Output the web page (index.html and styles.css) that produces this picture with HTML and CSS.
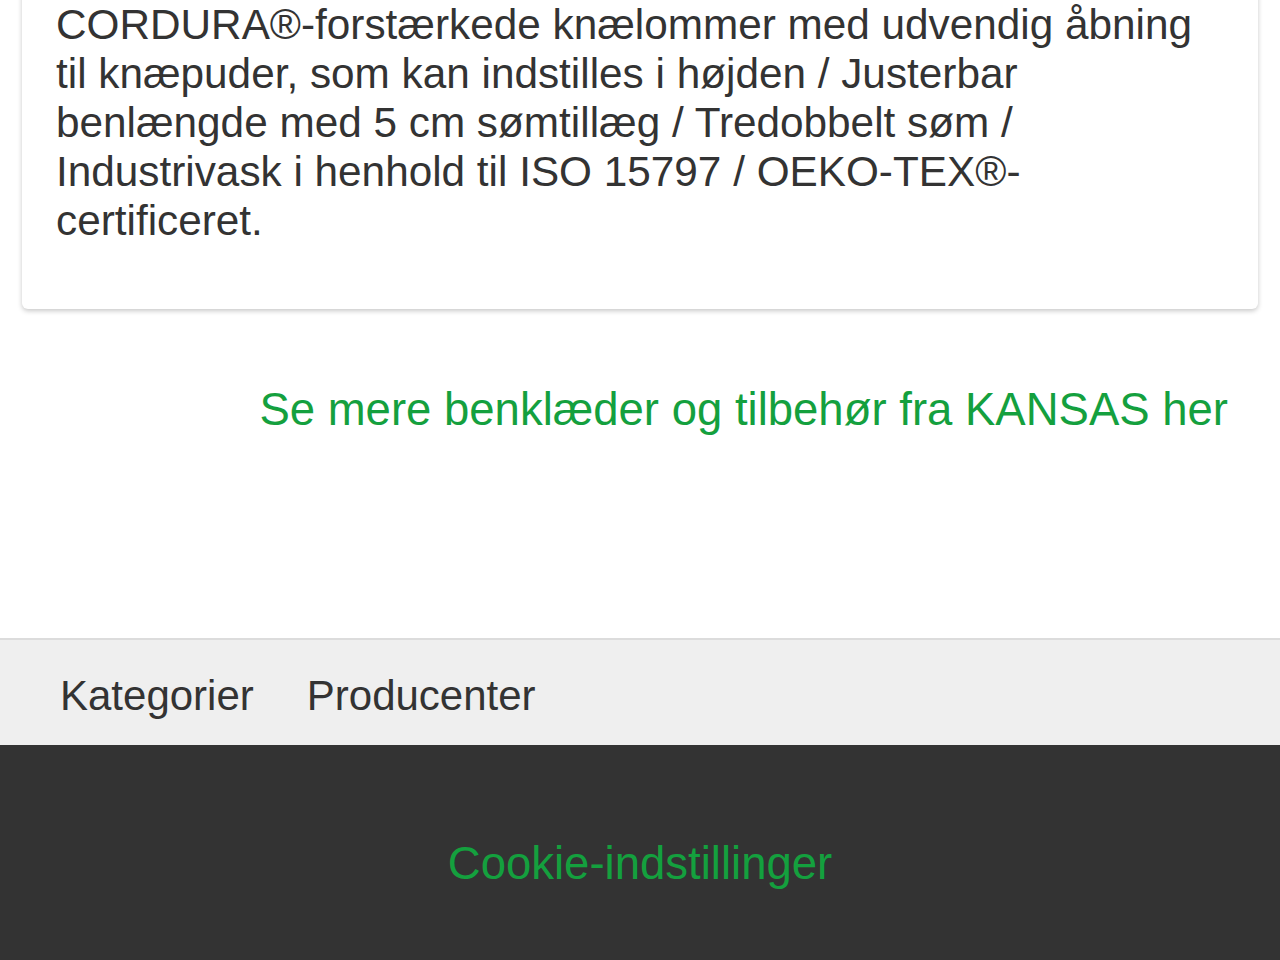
FILE: index.html
```html
<!DOCTYPE html>
<html lang="da">
<head>
<meta charset="utf-8">
<title>KANSAS</title>
<link rel="stylesheet" href="styles.css">
</head>
<body>
<div class="page">
  <div class="card">
    <p class="desc">CORDURA®-forstærkede knælommer med udvendig åbning<br>til knæpuder, som kan indstilles i højden / Justerbar<br>benlængde med 5 cm sømtillæg / Tredobbelt søm /<br>Industrivask i henhold til ISO 15797 / OEKO-TEX®-<br>certificeret.</p>
  </div>
  <div class="more">
    <a class="more-link" href="#">Se mere benklæder og tilbehør fra KANSAS her</a>
  </div>
</div>
<nav class="nav">
  <a class="nav-item" href="#">Kategorier</a>
  <a class="nav-item" href="#">Producenter</a>
</nav>
<footer class="footer">
  <a class="cookie" href="#">Cookie-indstillinger</a>
</footer>
</body>
</html>
```
FILE: styles.css
```css
html, body {
  margin: 0;
  padding: 0;
  background: #ffffff;
}
body {
  font-family: "Liberation Sans", Arial, Helvetica, sans-serif;
  color: #333333;
  overflow: hidden;
}
a { text-decoration: none; }
.page {
  height: 638px;
  display: flex;
  flex-direction: column;
}
.card {
  margin: -30px 22px 0 22px;
  padding: 30px 34px 64px 34px;
  background: #ffffff;
  border-radius: 6px;
  box-shadow: 0 2px 5px rgba(0, 0, 0, 0.22);
}
.desc {
  margin: 0;
  font-size: 42.3px;
  line-height: 49px;
  color: #333333;
}
.more {
  display: flex;
  justify-content: flex-end;
  padding: 75px 52px 0 0;
}
.more-link {
  font-size: 45.5px;
  line-height: 52px;
  color: #14a03e;
}
.nav {
  height: 105px;
  border-top: 2px solid #dcdcdc;
  background: #efefef;
  display: flex;
  align-items: center;
  gap: 53px;
  padding: 0 0 0 60px;
}
.nav-item {
  font-size: 42px;
  color: #333333;
  line-height: 49px;
  padding-top: 6px;
}
.footer {
  height: 215px;
  background: #333333;
  display: flex;
  justify-content: center;
  padding-top: 93px;
  box-sizing: border-box;
}
.cookie {
  font-size: 45.5px;
  line-height: 52px;
  color: #14a03e;
}
```
